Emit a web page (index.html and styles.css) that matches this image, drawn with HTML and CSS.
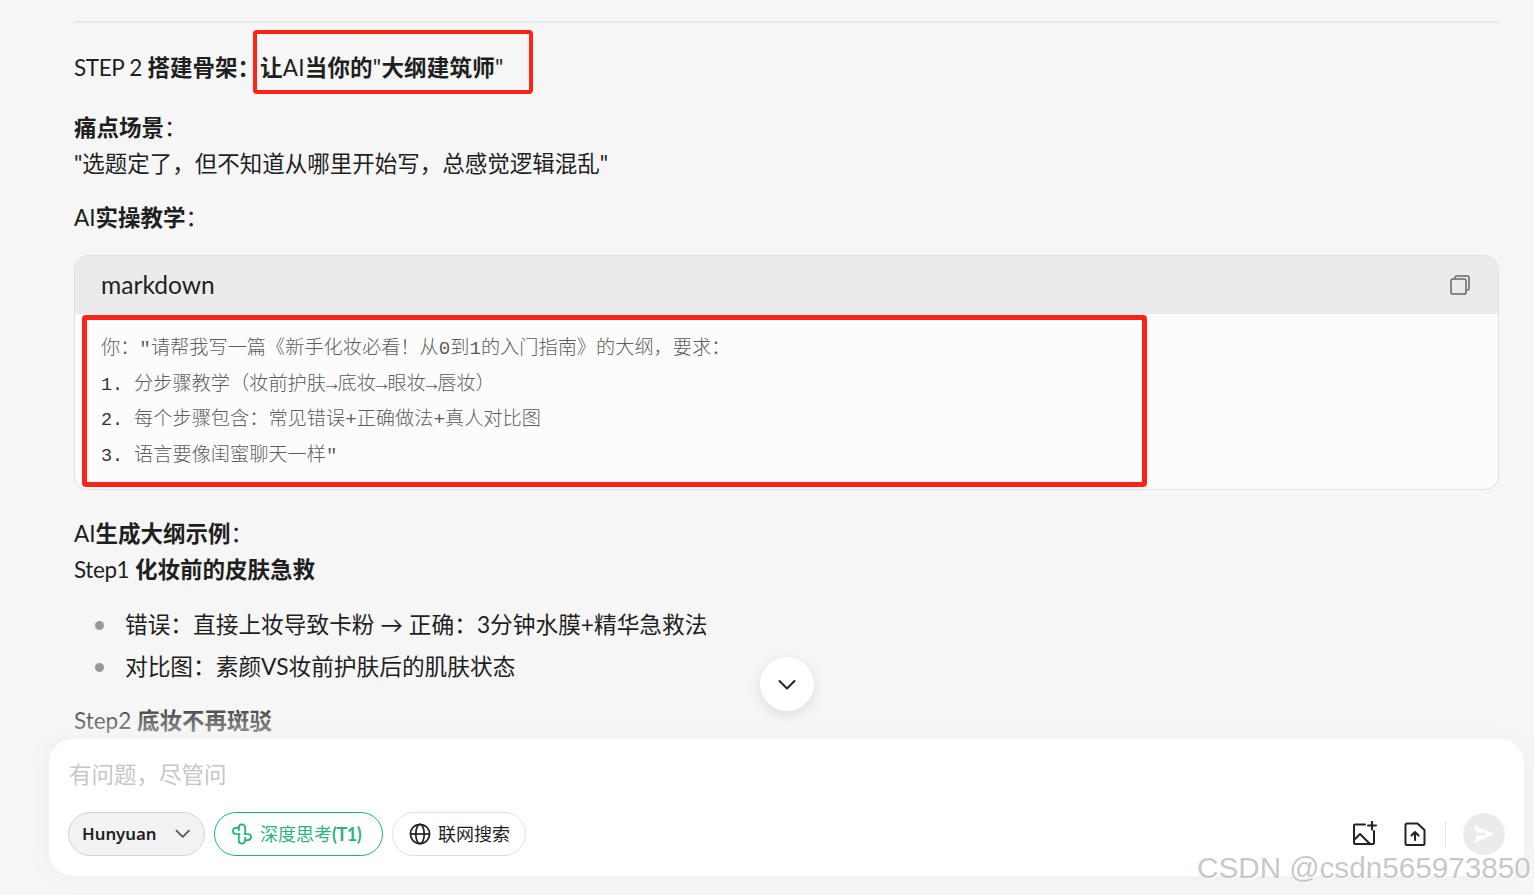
FILE: index.html
```html
<!DOCTYPE html>
<html lang="zh-CN">
<head>
    <meta charset="UTF-8">
    <title>Hunyuan</title>
    <link rel="stylesheet" href="styles.css">
</head>
<body>
    <div class="page">
        <div class="content">
            <hr class="rule">
            <p class="step"><span class="tight">STEP 2</span> <b>搭建骨架：</b><span class="wide"><b>让</b>AI<b>当你的</b>"<b>大纲建筑师</b>"</span></p>
            <p><b>痛点场景</b>：<br>"选题定了，但不知道从哪里开始写，总感觉逻辑混乱"</p>
            <p class="lead">AI<b>实操教学</b>：</p>

            <div class="code-card">
                <div class="code-head">
                    <span>markdown</span>
                    <svg class="copy-icon" viewBox="0 0 22 22" fill="none" stroke="#666" stroke-width="1.5">
                        <path d="M6 4.5V3.6C6 2.7 6.7 2 7.6 2H18.4C19.3 2 20 2.7 20 3.6V14.4C20 15.3 19.3 16 18.4 16H17.5"/>
                        <rect x="2" y="5" width="15" height="15" rx="1.8"/>
                    </svg>
                </div>
                <pre class="code-body"><i>你："请帮我写一篇《新手化妆必看！从0到1的入门指南》的大纲，要求：</i>
1. <i>分步骤教学（妆前护肤→底妆→眼妆→唇妆）</i>
2. <i>每个步骤包含：常见错误+正确做法+真人对比图</i>
3. <i>语言要像闺蜜聊天一样"</i></pre>
            </div>

            <p class="after-card">AI<b>生成大纲示例</b>：<br><span class="tight">Step1</span> <b>化妆前的皮肤急救</b></p>
            <ul>
                <li>错误：直接上妆导致卡粉 → 正确：3分钟水膜+精华急救法</li>
                <li>对比图：素颜VS妆前护肤后的肌肤状态</li>
            </ul>
            <p class="after-list">Step2 <b>底妆不再斑驳</b></p>

            <div class="mark mark-title"></div>
            <div class="mark mark-code"></div>
            <div class="fade"></div>
            <button class="scroll-btn">
                <svg viewBox="0 0 20 20" width="20" height="20" fill="none" stroke="#222" stroke-width="2" stroke-linecap="round" stroke-linejoin="round"><path d="M2.500 6l7.500 7.500L17.500 6"/></svg>
            </button>
        </div>

        <div class="composer">
            <div class="placeholder">有问题，尽管问</div>
            <div class="toolbar">
                <div class="chip chip-model">
                    <span>Hunyuan</span>
                    <svg viewBox="0 0 16 16" width="16" height="16" fill="none" stroke="#555" stroke-width="1.8" stroke-linecap="round" stroke-linejoin="round"><path d="M1.500 4.500L8 11l6.500-6.500"/></svg>
                </div>
                <div class="chip chip-think">
                    <svg viewBox="0 0 24 24" width="22" height="22" fill="none" stroke="#1eb473" stroke-width="1.9" stroke-linecap="round" stroke-linejoin="round">
                        <path d="M9.500 12H5.500a3.300 3.300 0 0 1 0-6.600H8.500"/>
                        <path d="M8.500 8V5a3.500 3.500 0 0 1 7 0v7"/>
                        <path d="M14.500 12h4a3.300 3.300 0 0 1 0 6.600H15.500"/>
                        <path d="M15.500 16v3a3.500 3.500 0 0 1-7 0v-7"/>
                    </svg>
                    <span>深度思考<em>(T1)</em></span>
                </div>
                <div class="chip">
                    <svg viewBox="0 0 22 22" width="22" height="22" fill="none" stroke="#222" stroke-width="1.7">
                        <circle cx="11" cy="11" r="9.6"/>
                        <ellipse cx="11" cy="11" rx="4.2" ry="9.6"/>
                        <path d="M1.4 11h19.2"/>
                    </svg>
                    <span>联网搜索</span>
                </div>
                <div class="tools">
                    <svg viewBox="0 0 26 26" width="26" height="26" fill="none" stroke="#222" stroke-width="2" stroke-linecap="round" stroke-linejoin="round">
                        <path d="M14 3.500H4a1 1 0 0 0-1 1V22a1 1 0 0 0 1 1h18a1 1 0 0 0 1-1V10"/>
                        <path d="M3 19l6-6 10 10"/>
                        <path d="M21 0.500v8M17 4.500h8"/>
                    </svg>
                    <svg viewBox="0 0 22 24" width="22" height="24" fill="none" stroke="#222" stroke-width="2" stroke-linecap="round" stroke-linejoin="round">
                        <path d="M3 1.500h10.500L20.500 8v13.500a1.500 1.500 0 0 1-1.500 1.500H3a1.500 1.500 0 0 1-1.500-1.500V3A1.500 1.500 0 0 1 3 1.500z"/>
                        <path d="M11 18v-8M7.500 13.500L11 10l3.500 3.500"/>
                    </svg>
                    <div class="divider"></div>
                    <div class="send">
                        <svg viewBox="0 0 20 18" width="20" height="18" fill="#fff"><path d="M0 0L20 9 0 18l3-7.800h8V7.800H3z"/></svg>
                    </div>
                </div>
            </div>
        </div>
        <div class="watermark">CSDN @csdn565973850</div>
    </div>
</body>
</html>
```

FILE: styles.css
```css
* {
    box-sizing: border-box;
}
html, body {
    margin: 0;
    height: 100%;
}
body {
    background-color: #f6f6f6;
    color: #1f1f1f;
    font-family: Lato, "Noto Sans CJK SC", sans-serif;
    font-size: 22.5px;
    line-height: 36px;
    overflow: hidden;
}
.page {
    position: relative;
    height: 895px;
}
.content {
    position: relative;
    height: 739px;
    padding: 21px 35px 0 74px;
    overflow: hidden;
}
.rule {
    height: 2px;
    margin: 0 0 27px;
    border: none;
    background-color: #e8e8e8;
}
p {
    margin: 0 0 18px;
}
.tight {
    letter-spacing: -0.4px;
}
.wide {
    letter-spacing: 0.2px;
}
.step {
    margin-bottom: 24px;
}
.lead {
    margin-bottom: 19px;
}
.code-card {
    height: 235px;
    border: 1px solid #e0e0e0;
    border-radius: 14px;
    background-color: #fcfcfc;
    overflow: hidden;
}
.code-head {
    display: flex;
    align-items: center;
    justify-content: space-between;
    height: 58px;
    padding: 0 27px 0 26px;
    background-color: #ebebeb;
    font-size: 24.6px;
}
.copy-icon {
    width: 22px;
    height: 22px;
}
.code-body {
    margin: 0;
    padding: 18px 26px 0;
    color: #333;
    font-family: "Liberation Mono", "Noto Sans CJK SC", monospace;
    font-size: 18.4px;
    line-height: 35.6px;
}
.code-body i {
    color: #5c5c5c;
    font-size: 19.2px;
    font-style: normal;
    font-weight: 300;
}
.after-card {
    margin-top: 26px;
}
ul {
    margin: 0 0 18px;
    padding: 1px 0 0 51px;
    list-style: none;
    font-size: 22.7px;
}
li {
    position: relative;
    margin-bottom: 6px;
}
li:before {
    content: "";
    position: absolute;
    left: -30px;
    top: 14px;
    width: 9px;
    height: 9px;
    border-radius: 50%;
    background-color: #999;
}
.mark {
    position: absolute;
    border: 4px solid #ff2317;
    border-radius: 4px;
}
.mark-title {
    left: 253px;
    top: 30px;
    width: 280px;
    height: 64px;
}
.mark-code {
    left: 82px;
    top: 315px;
    width: 1065px;
    height: 172px;
    border-width: 5px;
}
.fade {
    position: absolute;
    left: 0;
    right: 0;
    bottom: 0;
    height: 44px;
    background: linear-gradient(rgba(246,246,246,0), rgba(246,246,246,0.6));
}
.scroll-btn {
    position: absolute;
    left: 760px;
    top: 657px;
    display: flex;
    align-items: center;
    justify-content: center;
    width: 54px;
    height: 54px;
    padding: 2px 0 0;
    border: none;
    border-radius: 50%;
    background-color: #fff;
    box-shadow: 0 4px 14px rgba(0,0,0,0.1);
}
.composer {
    height: 137px;
    margin: 0 10px 0 49px;
    padding: 18px 19px 0 19px;
    border-radius: 24px;
    background-color: #fff;
    box-shadow: 0 0 30px rgba(0,0,0,0.04);
}
.placeholder {
    padding-left: 1px;
    color: #c6c6c6;
    font-size: 22.5px;
}
.toolbar {
    display: flex;
    align-items: center;
    gap: 9px;
    margin-top: 19px;
}
.chip {
    display: flex;
    align-items: center;
    gap: 7px;
    height: 44px;
    padding: 0 15px 0 16px;
    border: 1px solid #e0e0e0;
    border-radius: 22px;
    font-size: 18px;
}
.chip-model {
    gap: 18px;
    width: 137px;
    padding: 0 14px 0 13px;
    border-color: #d4d4d4;
    background-color: #f2f2f2;
    font-family: "Noto Sans", sans-serif;
    font-size: 16.8px;
    font-weight: 600;
}
.chip-think {
    width: 169px;
    border-color: #1eb473;
    color: #2db47c;
}
.chip-think em {
    font-style: normal;
    font-weight: 700;
    letter-spacing: -0.5px;
}
.tools {
    display: flex;
    align-items: center;
    margin-left: auto;
}
.tools svg:nth-child(2) {
    margin-left: 27px;
}
.divider {
    width: 1px;
    height: 27px;
    margin: 0 17px 0 19px;
    background-color: #e4e4e4;
}
.send {
    display: flex;
    align-items: center;
    justify-content: center;
    width: 42px;
    height: 42px;
    border-radius: 50%;
    background-color: #ebebeb;
}
.watermark {
    position: absolute;
    left: 1197px;
    top: 850px;
    color: rgba(175,175,175,0.7);
    font-family: "Liberation Sans", sans-serif;
    font-size: 29.7px;
    text-shadow: 1px 1px 1px #fff;
    white-space: nowrap;
}
```
